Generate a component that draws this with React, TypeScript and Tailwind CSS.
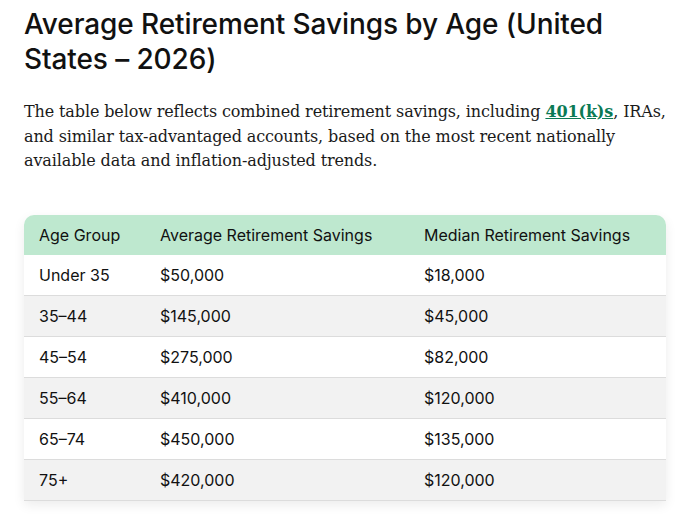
import React from "react";

const rows = [
  ["Under 35", "$50,000", "$18,000"],
  ["35–44", "$145,000", "$45,000"],
  ["45–54", "$275,000", "$82,000"],
  ["55–64", "$410,000", "$120,000"],
  ["65–74", "$450,000", "$135,000"],
  ["75+", "$420,000", "$120,000"],
];

export default function App() {
  return (
    <div className="bg-white w-[677px] h-[515px] overflow-hidden pl-6 pr-[11px] pt-[7px]">
      <h1 className="text-[28px] leading-[35px] text-[#111] font-medium tracking-[-0.1px]" style={{ fontFamily: "Inter, 'Liberation Sans', sans-serif" }}>
        Average Retirement Savings by Age (United States – 2026)
      </h1>
      <p className="mt-[23px] text-[16px] leading-[24.5px] text-[#1a1a1a] tracking-[-0.12px]" style={{ fontFamily: "'DejaVu Serif', serif" }}>
        The table below reflects combined retirement savings, including{" "}
        <a className="text-[#0b7a55] font-bold underline">401(k)s</a>, IRAs, and similar tax-advantaged accounts, based on the most recent nationally available data and inflation-adjusted trends.
      </p>
      <div className="mt-[41px] rounded-t-[10px] shadow-[0_4px_12px_rgba(0,0,0,0.08)] overflow-hidden" style={{ fontFamily: "Inter, 'Liberation Sans', sans-serif" }}>
        <div className="grid grid-cols-[121px_264px_1fr] bg-[#bee8cf] h-[40px] items-center text-[16px] text-[#111]">
          <div className="pl-[15px]">Age Group</div>
          <div className="pl-[15px]">Average Retirement Savings</div>
          <div className="pl-[15px]">Median Retirement Savings</div>
        </div>
        {rows.map((r, i) => (
          <div key={i} className={`grid grid-cols-[121px_264px_1fr] h-[41px] items-center text-[16px] text-[#111] border-b border-[#dcdcdc] ${i % 2 === 0 ? "bg-white" : "bg-[#f2f2f2]"}`}>
            <div className="pl-[15px]">{r[0]}</div>
            <div className="pl-[15px]">{r[1]}</div>
            <div className="pl-[15px]">{r[2]}</div>
          </div>
        ))}
      </div>
    </div>
  );
}
